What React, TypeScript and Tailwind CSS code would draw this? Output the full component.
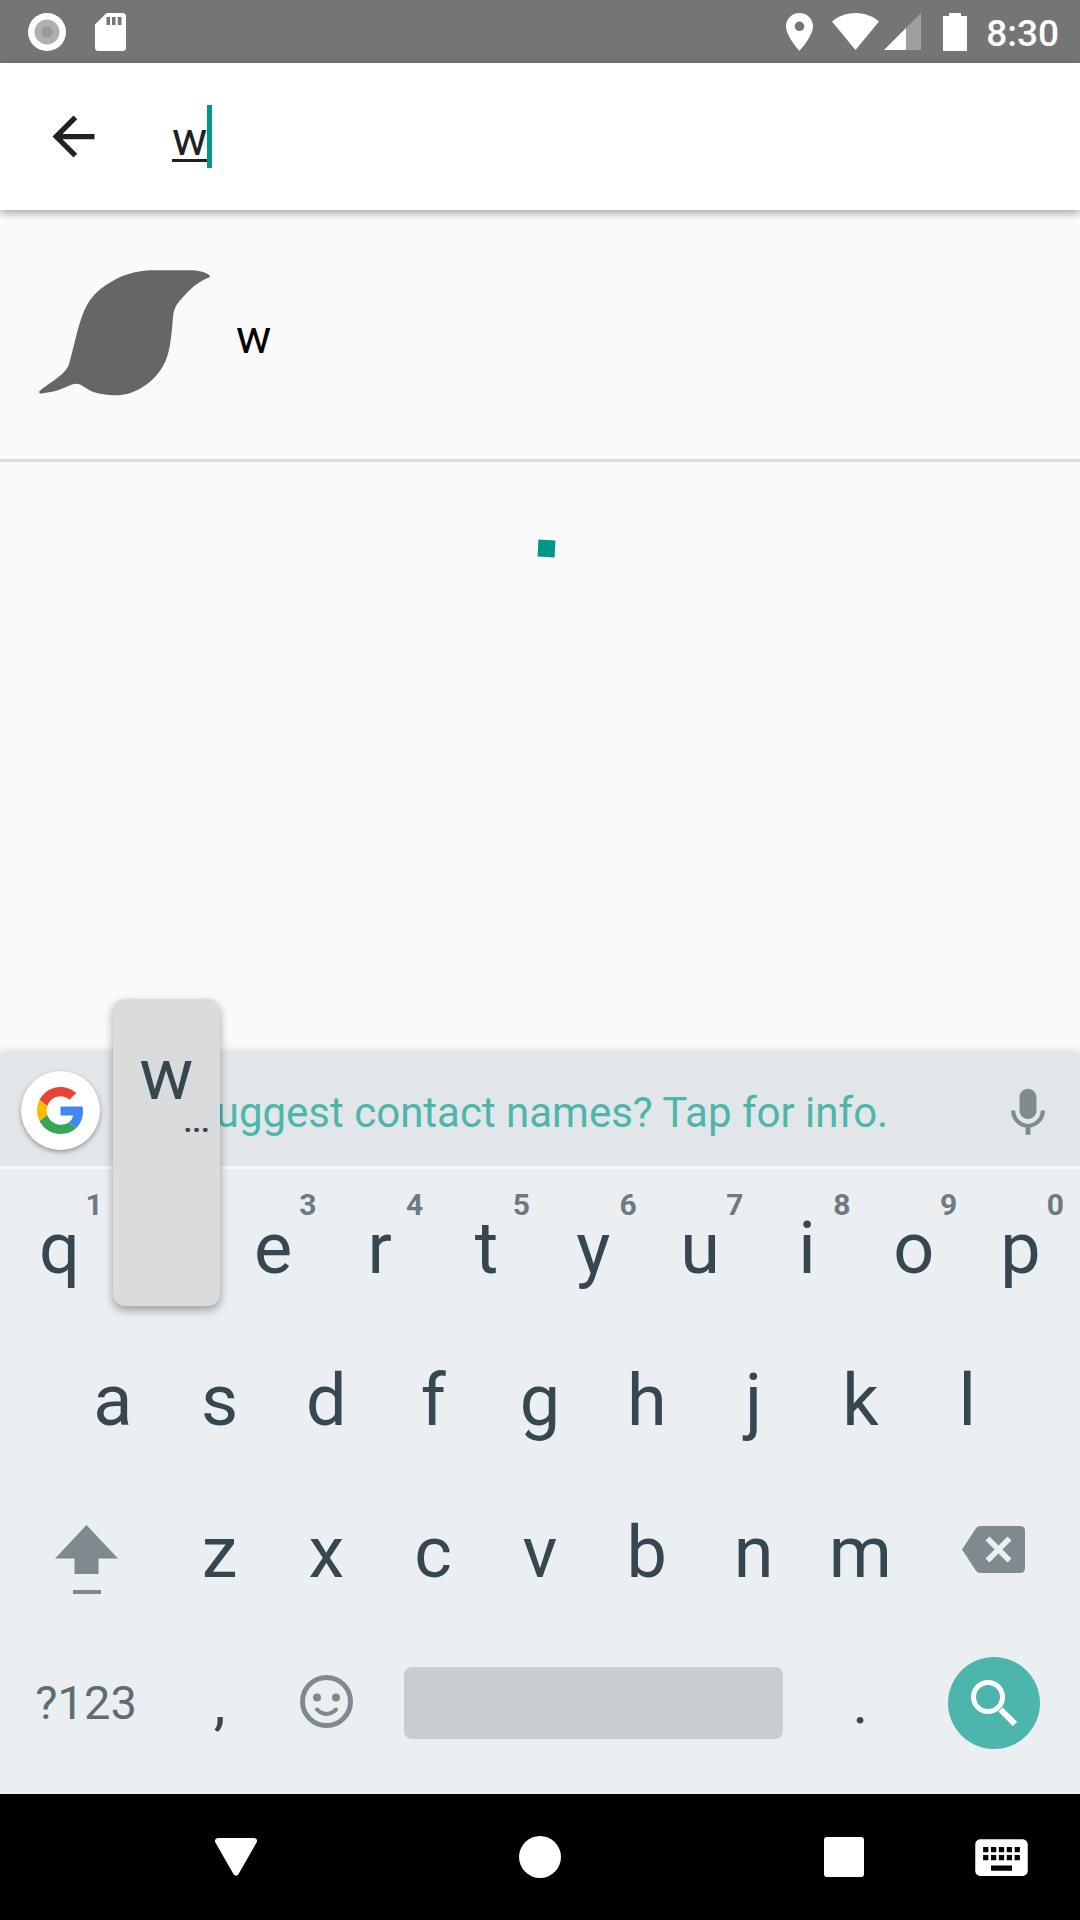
import React, { useState } from "react";

const topRow = [
  { key: "q", hint: "1" },
  { key: "w", hint: "2" },
  { key: "e", hint: "3" },
  { key: "r", hint: "4" },
  { key: "t", hint: "5" },
  { key: "y", hint: "6" },
  { key: "u", hint: "7" },
  { key: "i", hint: "8" },
  { key: "o", hint: "9" },
  { key: "p", hint: "0" },
];
const homeRow = ["a", "s", "d", "f", "g", "h", "j", "k", "l"];
const bottomRow = ["z", "x", "c", "v", "b", "n", "m"];

function StatusBar() {
  return (
    <header className="flex h-[63px] shrink-0 items-center justify-between bg-[#757575] pr-[21px] pl-7 text-white">
      <div className="flex items-center gap-[29px]">
        <svg className="size-[38px]" viewBox="0 0 38 38" aria-hidden="true">
          <circle cx="19" cy="19" r="19" fill="#fff" />
          <circle cx="19" cy="19" r="12.5" fill="#b0b0b0" />
          <circle cx="19" cy="19" r="5.7" fill="#999" />
        </svg>
        <svg className="h-[38px] w-[31px]" viewBox="0 0 31 38" aria-hidden="true">
          <path
            fill="#fff"
            fillRule="evenodd"
            d="M11.5 0H27.500Q31 0 31 3.500V34.500Q31 38 27.500 38H3.500Q0 38 0 34.500V11.500zM11.500 4v8h3.500V4zM17 4v8h3.500V4zM22.800 4v8h3.700V4z"
          />
        </svg>
      </div>
      <div className="flex items-center">
        <svg className="mr-[19px] h-[38px] w-[27px]" viewBox="5 2 14 20" preserveAspectRatio="none" aria-hidden="true">
          <path
            fill="#fff"
            d="M12 2C8.130 2 5 5.130 5 9c0 5.250 7 13 7 13s7-7.750 7-13c0-3.870-3.130-7-7-7zm0 9.500a2.500 2.500 0 0 1 0-5 2.500 2.500 0 0 1 0 5z"
          />
        </svg>
        <svg className="mr-[5px] h-[37px] w-[47px]" viewBox="0 0 47 37" aria-hidden="true">
          <path fill="#fff" d="M23.500 37 0 8.500C6 3.500 14 0 23.500 0S41 3.500 47 8.500z" />
        </svg>
        <svg className="mr-[22px] size-[37px]" viewBox="0 0 37 37" aria-hidden="true">
          <path fill="#9f9f9f" d="M37 0v37H0z" />
          <path fill="#fff" d="M22 15v22H0z" />
        </svg>
        <svg className="mr-[19px] h-[38px] w-6" viewBox="0 0 24 38" aria-hidden="true">
          <path fill="#fff" d="M6 0h12v3h6v35H0V3h6z" />
        </svg>
        <time className="pt-1 text-[37px] leading-[44px] font-medium">8:30</time>
      </div>
    </header>
  );
}

function SearchBar() {
  const [query, setQuery] = useState("w");
  return (
    <form
      className="relative z-10 flex h-[147px] shrink-0 items-center bg-white pl-[42px] shadow-[0_3px_8px_rgba(0,0,0,0.35)]"
      onSubmit={(e) => e.preventDefault()}
    >
      <button type="button" aria-label="Back" className="mr-[67px]">
        <svg className="size-[63px]" viewBox="0 0 24 24" aria-hidden="true">
          <path fill="#212121" d="M20 11H7.830l5.590-5.590L12 4l-8 8 8 8 1.410-1.410L7.830 13H20v-2z" />
        </svg>
      </button>
      <input
        aria-label="Search"
        value={query}
        onChange={(e) => setQuery(e.target.value)}
        className="field-sizing-content h-[63px] bg-transparent pt-1.5 text-[47px] text-[#212121] underline decoration-[3px] underline-offset-4 caret-transparent outline-none"
      />
      <span className="h-[63px] w-[5px] bg-[#009688]" />
    </form>
  );
}

function Results() {
  return (
    <main className="flex flex-1 flex-col bg-[#fafafa]">
      <button type="button" className="flex h-[252px] w-full shrink-0 items-center border-b-[3px] border-[#dbdcdc] pl-[38px] text-left">
        <svg className="mr-[25px] mb-1 h-[126px] w-[173px]" viewBox="114 149 519 380" aria-hidden="true">
          <path
            fill="#666"
            d="M115 517C140 490 185 475 205 437C220 385 230 330 245 290C262 240 290 210 330 187C365 165 405 152 450 150L580 150C600 152 630 158 632 170C600 182 580 198 555 225C525 255 521 270 519 300C515 350 510 390 502 410C490 450 460 485 420 507C400 518 375 527 345 527C320 527 300 523 282 518C260 510 245 493 230 492C215 492 195 503 175 511C155 518 135 519 120 522Z"
          />
        </svg>
        <span className="pt-1.5 text-[47px] text-black">w</span>
      </button>
      <div className="flex justify-center pt-[78px] pl-3" role="status" aria-label="Loading">
        <span className="size-[17px] rotate-3 bg-[#009688]" />
      </div>
    </main>
  );
}

function SuggestionStrip() {
  return (
    <div className="flex h-[116px] items-center justify-between border-b-[3px] border-[#f5f7f9] bg-[#e2e6e9] pt-0.5 pr-[23px] pl-[21px]">
      <button
        type="button"
        aria-label="Google"
        className="flex size-[79px] items-center justify-center rounded-full bg-white shadow-[0_2px_5px_rgba(0,0,0,0.35)]"
      >
        <svg className="size-[47px]" viewBox="0 0 48 48" aria-hidden="true">
          <path fill="#EA4335" d="M24 9.500c3.540 0 6.710 1.220 9.210 3.600l6.850-6.850C35.900 2.380 30.470 0 24 0 14.620 0 6.510 5.380 2.560 13.220l7.980 6.190C12.430 13.720 17.740 9.500 24 9.500z" />
          <path fill="#4285F4" d="M46.980 24.550c0-1.570-.15-3.090-.38-4.550H24v9.020h12.940c-.58 2.960-2.260 5.480-4.780 7.180l7.730 6c4.510-4.180 7.090-10.360 7.090-17.650z" />
          <path fill="#FBBC05" d="M10.530 28.590c-.48-1.450-.76-2.990-.76-4.590s.27-3.140.76-4.590l-7.980-6.190C.92 16.460 0 20.120 0 24c0 3.880.92 7.540 2.560 10.780l7.970-6.190z" />
          <path fill="#34A853" d="M24 48c6.480 0 11.930-2.130 15.890-5.810l-7.730-6c-2.150 1.450-4.920 2.300-8.160 2.300-6.260 0-11.570-4.220-13.470-9.910l-7.980 6.190C6.510 42.620 14.620 48 24 48z" />
        </svg>
      </button>
      <button type="button" className="mr-5 pt-1 text-[42px] text-[#4db6ac]">
        Suggest contact names? Tap for info.
      </button>
      <button type="button" aria-label="Voice input" className="pt-1">
        <svg className="size-[58px]" viewBox="0 0 24 24" aria-hidden="true">
          <path
            fill="#7f8a8f"
            d="M12 14.500c1.940 0 3.500-1.560 3.500-3.500V5.500C15.500 3.560 13.940 2 12 2S8.500 3.560 8.500 5.500V11c0 1.940 1.560 3.500 3.500 3.500zM17.300 11c0 3-2.540 5.500-5.300 5.500S6.700 14 6.700 11H5c0 3.610 2.620 6.530 6 7.020V21h2v-2.980c3.380-.49 6-3.410 6-7.020h-1.700z"
          />
        </svg>
      </button>
    </div>
  );
}

function Key({ label, hint, pressed }: { label: string; hint?: string; pressed?: boolean }) {
  return (
    <button type="button" className="relative flex flex-[2] basis-0 items-center justify-center text-[72px] text-[#37474f]">
      {!pressed && label}
      {!pressed && hint && (
        <span className="absolute top-[17px] right-2.5 text-[30px] leading-[30px] font-bold text-[#6f7a80]">{hint}</span>
      )}
      {pressed && (
        <span className="absolute inset-x-0 bottom-[19px] z-20 flex h-[307px] flex-col rounded-xl bg-[#dadbdd] pt-11 shadow-[0_4px_10px_rgba(0,0,0,0.35)]">
          <span className="text-center leading-[64px]">{label}</span>
          <span className="pr-2.5 text-right text-[30px] leading-[30px] font-bold">...</span>
        </span>
      )}
    </button>
  );
}

function Keyboard() {
  return (
    <section aria-label="Keyboard" className="relative shrink-0 bg-[#ebeff2] shadow-[0_0_10px_rgba(0,0,0,0.2)]">
      <SuggestionStrip />
      <div className="px-1.5 pt-1 pb-[13px]">
        <div className="flex h-[152px]">
          {topRow.map((k) => (
            <Key key={k.key} label={k.key} hint={k.hint} pressed={k.key === "w"} />
          ))}
        </div>
        <div className="flex h-[152px]">
          <span className="flex-1" />
          {homeRow.map((k) => (
            <Key key={k} label={k} />
          ))}
          <span className="flex-1" />
        </div>
        <div className="flex h-[152px]">
          <button type="button" aria-label="Shift" className="flex flex-[3] basis-0 items-center justify-center pt-3.5">
            <svg className="h-[70px] w-[63px]" viewBox="0 0 63 70" aria-hidden="true">
              <path fill="#7f8a8f" d="M31.500 0 63 33.500H43.500V49H19.500V33.500H0zM18 65h28v4H18z" />
            </svg>
          </button>
          {bottomRow.map((k) => (
            <Key key={k} label={k} />
          ))}
          <button type="button" aria-label="Backspace" className="flex flex-[3] basis-0 items-center justify-center pb-2">
            <svg className="h-[47px] w-[63px]" viewBox="0 0 63 47" aria-hidden="true">
              <path fill="#7f8a8f" d="M18 0H58Q63 0 63 5V42Q63 47 58 47H18Q15.500 47 14 44.800L0 23.500 14 2.200Q15.500 0 18 0z" />
              <path stroke="#ebeff2" strokeWidth="5.500" d="m25.500 12.500 22 22M47.500 12.500l-22 22" />
            </svg>
          </button>
        </div>
        <div className="grid h-[152px] grid-cols-[3fr_2fr_2fr_8fr_2fr_3fr] pb-1">
          <button type="button" className="flex items-center justify-center text-[47px] text-[#5f6d73]">
            ?123
          </button>
          <button type="button" className="flex items-center justify-center text-[60px] text-[#37474f]">
            ,
          </button>
          <button type="button" aria-label="Emoji" className="flex items-center justify-center pb-1">
            <svg className="size-[53px]" viewBox="0 0 53 53" fill="none" aria-hidden="true">
              <circle cx="26.500" cy="26.500" r="24" stroke="#7f8a8f" strokeWidth="5" />
              <circle cx="17" cy="22.500" r="4" fill="#7f8a8f" />
              <circle cx="36" cy="22.500" r="4" fill="#7f8a8f" />
              <path d="M17 34.500Q26.500 43.500 36 34.500" stroke="#7f8a8f" strokeWidth="4" strokeLinecap="round" />
            </svg>
          </button>
          <div className="flex items-center px-6">
            <button type="button" aria-label="Space" className="h-[72px] w-full rounded-lg bg-[#c9cdd0]" />
          </div>
          <button type="button" className="flex items-center justify-center text-[60px] text-[#37474f]">
            .
          </button>
          <div className="flex items-center justify-center">
            <button type="button" aria-label="Search" className="flex size-[92px] items-center justify-center rounded-full bg-[#4db6ac]">
              <svg className="size-[46px]" viewBox="0 0 46 46" fill="none" stroke="#fff" aria-hidden="true">
                <circle cx="17" cy="17" r="14.500" strokeWidth="5" />
                <path strokeWidth="6" d="m29.500 29.500 14.500 14.500" />
              </svg>
            </button>
          </div>
        </div>
      </div>
    </section>
  );
}

function NavBar() {
  return (
    <nav className="grid h-[126px] shrink-0 grid-cols-[157px_1fr_157px] bg-black">
      <span />
      <div className="flex justify-between">
        <button type="button" aria-label="Hide keyboard" className="flex w-[158px] items-center justify-center">
          <svg className="h-[38px] w-[42px]" viewBox="0 0 42 38" aria-hidden="true">
            <path fill="#fff" stroke="#fff" strokeWidth="6" strokeLinejoin="round" d="M3 3h36L21 34.500z" />
          </svg>
        </button>
        <button type="button" aria-label="Home" className="flex w-[158px] items-center justify-center">
          <span className="size-[42px] rounded-full bg-white" />
        </button>
        <button type="button" aria-label="Recent apps" className="flex w-[158px] items-center justify-center">
          <span className="size-10 rounded-[3px] bg-white" />
        </button>
      </div>
      <button type="button" aria-label="Switch keyboard" className="flex items-center justify-center">
        <svg className="size-[63px]" viewBox="0 0 24 24" aria-hidden="true">
          <path
            fill="#fff"
            d="M20 5H4c-1.100 0-1.990.9-1.990 2L2 17c0 1.100.9 2 2 2h16c1.100 0 2-.9 2-2V7c0-1.100-.9-2-2-2zm-9 3h2v2h-2V8zm0 3h2v2h-2v-2zM8 8h2v2H8V8zm0 3h2v2H8v-2zm-1 2H5v-2h2v2zm0-3H5V8h2v2zm9 7H8v-2h8v2zm0-4h-2v-2h2v2zm0-3h-2V8h2v2zm3 3h-2v-2h2v2zm0-3h-2V8h2v2z"
          />
        </svg>
      </button>
    </nav>
  );
}

export default function App() {
  return (
    <div className="flex min-h-screen flex-col overflow-hidden font-[Roboto,sans-serif]">
      <StatusBar />
      <SearchBar />
      <Results />
      <Keyboard />
      <NavBar />
    </div>
  );
}
